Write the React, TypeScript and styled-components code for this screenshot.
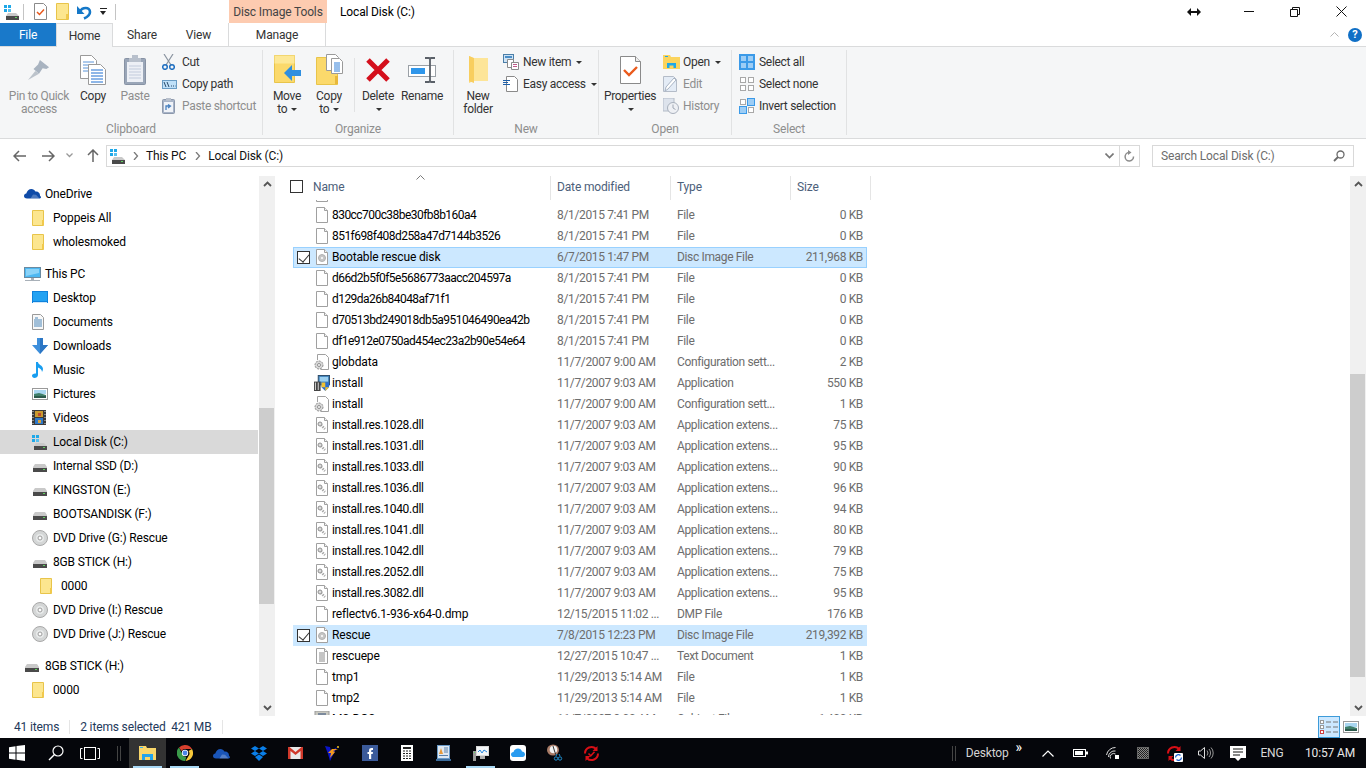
import React, { FC, ReactNode } from 'react'
import styled, { createGlobalStyle } from 'styled-components'

const GlobalStyle = createGlobalStyle`
  html, body {
    margin: 0;
    padding: 0;
    background: #fff;
    overflow: hidden;
  }
  body {
    font-family: Roboto, 'Noto Sans', sans-serif;
    font-size: 12px;
    letter-spacing: -0.15px;
    color: #000;
  }
  * { box-sizing: border-box; }
  svg { display: block; flex: none; }
`

/* ---------- small icons ---------- */

const DriveIcon: FC = () => (
  <svg width="16" height="16" viewBox="0 0 16 16">
    <rect x="0" y="1" width="3" height="3" fill="#1fa8e8" />
    <rect x="4" y="1" width="3" height="3" fill="#1fa8e8" />
    <rect x="0" y="5" width="3" height="3" fill="#1fa8e8" />
    <rect x="4" y="5" width="3" height="3" fill="#55c0ef" />
    <path d="M4 9h8l3 3v1H2v-1z" fill="#c9c9c9" />
    <rect x="2" y="12" width="13" height="4" fill="#4a4a4a" />
    <rect x="11" y="13" width="2" height="1" fill="#5fd35f" />
  </svg>
)

const PlainDriveIcon: FC = () => (
  <svg width="16" height="16" viewBox="0 0 16 16">
    <path d="M3 6h10l2 3v1H1V9z" fill="#c9c9c9" />
    <rect x="1" y="10" width="14" height="4" fill="#4a4a4a" />
    <rect x="11" y="11" width="2" height="1" fill="#5fd35f" />
  </svg>
)

const DvdIcon: FC = () => (
  <svg width="16" height="16" viewBox="0 0 16 16">
    <circle cx="8" cy="8" r="7.5" fill="#d4d6d6" stroke="#a8a8a8" />
    <circle cx="8" cy="8" r="4" fill="#e8eaea" />
    <circle cx="8" cy="8" r="2" fill="#fff" stroke="#9c9c9c" />
  </svg>
)

const NavFolderIcon: FC = () => (
  <svg width="13" height="16" viewBox="0 0 13 16">
    <path d="M.5.500h11v15H.500z" fill="#fce68f" stroke="#e8c44a" />
    <rect x="10" y="10" width="2" height="5" fill="#f1c94c" />
  </svg>
)

const OneDriveIcon: FC<{ color?: string }> = ({ color = '#0f4ba8' }) => (
  <svg width="17" height="11" viewBox="0 0 17 11">
    <path d="M3 10.500C1 10.500 0 9.200 0 8c0-1.400 1-2.300 2.300-2.400C3 3 5 1 7.400 1c1.800 0 3.300 1 4 2.500 2.700-.5 4.600 1.500 4.600 3.700v.5c.7.400 1 1 1 1.600 0 .7-.5 1.200-1.200 1.200z" fill={color} />
    <path d="M6.500 10.500 9 6.500l3 .3 3.500 3.700z" fill="#fff" opacity=".25" />
  </svg>
)

const MonitorIcon: FC = () => (
  <svg width="17" height="16" viewBox="0 0 17 16">
    <rect x=".5" y="1.500" width="16" height="10" fill="#4db8f2" stroke="#6a8aa0" />
    <path d="M2 3h13v4L2 10z" fill="#8bd3f8" />
    <rect x="7" y="12" width="3" height="2" fill="#a8b0b8" />
    <rect x="1" y="14" width="15" height="1" fill="#a8b0b8" />
  </svg>
)

const DesktopIcon: FC = () => (
  <svg width="16" height="13" viewBox="0 0 16 13">
    <rect width="16" height="12" fill="#0f82dc" />
    <rect x="1" y="1" width="14" height="9" fill="#23a2f2" />
    <rect x="1" y="11" width="14" height="1" fill="#cfe8fa" />
  </svg>
)

const DocumentsIcon: FC = () => (
  <svg width="12" height="16" viewBox="0 0 12 16">
    <path d="M.5.500h8l3 3v12H.500z" fill="#f8f8f8" stroke="#9a9a9a" />
    <path d="M3 4h3M2 6h8M2 8h8M2 10h8M2 12h8" stroke="#4a86b8" />
  </svg>
)

const DownloadsIcon: FC = () => (
  <svg width="16" height="16" viewBox="0 0 16 16">
    <path d="M5 0h6v7h5l-8 9-8-9h5z" fill="#3d8fdc" />
    <path d="M8 0h3v7h5l-8 9z" fill="#2c76c4" />
  </svg>
)

const MusicIcon: FC = () => (
  <svg width="12" height="16" viewBox="0 0 12 16">
    <path d="M4 0h2c0 3 5 3 5 7 0 1-.4 2-1 3 0-2-2-4-4-4.500V13c0 2-2 3-3.500 3S0 15 0 13.600 2 11 4 11.500z" fill="#199ef0" />
  </svg>
)

const PicturesIcon: FC = () => (
  <svg width="16" height="12" viewBox="0 0 16 12">
    <rect x=".5" y=".5" width="15" height="11" fill="#fff" stroke="#9a9a9a" />
    <rect x="2" y="2" width="12" height="4" fill="#a9d6f0" />
    <path d="M2 6l5-1 7 2v3H2z" fill="#3f7f6a" />
    <rect x="2" y="8" width="12" height="2" fill="#2c5a4c" />
  </svg>
)

const VideosIcon: FC = () => (
  <svg width="14" height="15" viewBox="0 0 14 15">
    <rect width="14" height="15" fill="#3a3a3a" />
    <path d="M1 1v1M1 4v1M1 7v1M1 10v1M1 13v1M13 1v1M13 4v1M13 7v1M13 10v1M13 13v1" stroke="#ddd" />
    <rect x="3" y="1" width="8" height="6" fill="#c99a2e" />
    <rect x="3" y="8" width="8" height="6" fill="#2e78c9" />
    <rect x="6" y="3" width="3" height="3" fill="#c04a2e" />
    <rect x="6" y="10" width="3" height="3" fill="#d8a23a" />
  </svg>
)

const DocShape: FC<{ children?: ReactNode }> = ({ children }) => (
  <svg width="16" height="16" viewBox="0 0 16 16">
    <path d="M2.500.500h8l3 3v12h-11z" fill="#fff" stroke="#a0a0a0" />
    <path d="M10.500.500v3h3" fill="#f4f4f4" stroke="#a0a0a0" />
    {children}
  </svg>
)

const FileIcon: FC = () => <DocShape />

const DiscFileIcon: FC = () => (
  <DocShape>
    <circle cx="8" cy="9" r="3.500" fill="#c6c6c6" stroke="#b0b0b0" />
    <circle cx="8" cy="9" r="1" fill="#fff" />
  </DocShape>
)

const ConfigFileIcon: FC = () => (
  <svg width="16" height="16" viewBox="0 0 16 16">
    <path d="M3.500 6V.500h8l3 3v12h-8" fill="#fff" stroke="#a0a0a0" />
    <circle cx="5" cy="11" r="4" fill="#d8d8d8" stroke="#8f8f8f" strokeDasharray="2 1" />
    <circle cx="5" cy="11" r="1.500" fill="#fff" stroke="#8f8f8f" />
  </svg>
)

const DllFileIcon: FC = () => (
  <DocShape>
    <path d="M5 6l6 6" stroke="#a8a8a8" strokeWidth="2.500" strokeDasharray="1.500 1" />
    <circle cx="6" cy="7" r="2" fill="#dcdcdc" stroke="#909090" />
  </DocShape>
)

const InstallIcon: FC = () => (
  <svg width="16" height="16" viewBox="0 0 17 17">
    <rect x="4.500" y=".5" width="12" height="10" fill="#3e7fb8" stroke="#2b4a66" />
    <rect x="6" y="2" width="9" height="5" fill="#9cd0f0" />
    <rect x="0" y="7" width="7" height="10" fill="#444" />
    <path d="M1 8h1v8H1zM4 8h1v8H4z" fill="#ddd" />
    <path d="M8 8h8v5l-4 4-4-4z" fill="#2a6fd0" />
    <path d="M8 8h4v5H8zM12 13h4l-4 4z" fill="#f2c230" />
  </svg>
)

const TextFileIcon: FC = () => (
  <DocShape>
    <path d="M5 5h6M5 7h6M5 9h6M5 11h6M5 13h6" stroke="#8a8a8a" />
  </DocShape>
)

const MsDosIcon: FC = () => (
  <svg width="16" height="16" viewBox="0 0 16 16">
    <rect x="1" y="0" width="14" height="16" fill="#c8c8c0" stroke="#999" />
    <rect x="4" y="2" width="8" height="4" fill="#7c8a9c" />
  </svg>
)

/* ---------- ribbon icons ---------- */

const QuickPropsIcon: FC = () => (
  <svg width="13" height="17" viewBox="0 0 13 17">
    <path d="M.5.500h9l3 3v13H.500z" fill="#fff" stroke="#8a8a8a" />
    <path d="M3 9l2.500 2.500L10 6.500" fill="none" stroke="#e8581c" strokeWidth="1.500" />
  </svg>
)

const QuickFolderIcon: FC = () => (
  <svg width="14" height="17" viewBox="0 0 14 17">
    <path d="M.5.500h12v16H.500z" fill="#fce68f" stroke="#e8c44a" />
    <rect x="10" y="11" width="2" height="5" fill="#f1c94c" />
  </svg>
)

const UndoIcon: FC = () => (
  <svg width="15" height="16" viewBox="0 0 15 16">
    <path d="M3 7.500C5 3 13 2.500 13 8c0 3-2.500 5-6 6.500" fill="none" stroke="#1578c8" strokeWidth="2.600" />
    <path d="M0 2v8h7.500z" fill="#1578c8" />
  </svg>
)

const PinIcon: FC = () => (
  <svg width="22" height="22" viewBox="0 0 24 24">
    <path d="M0 23l8-10 4 3z" fill="#bcc3cb" />
    <path d="M13 1l10 8-3 2-4-1-4 6-6-5 5-5z" fill="#a8b3c0" />
  </svg>
)

const CopyLargeIcon: FC = () => (
  <svg width="26" height="30" viewBox="0 0 26 30">
    <path d="M.5.500h11l5 5v18H.500z" fill="#fff" stroke="#9a9a9a" />
    <path d="M3 7h11M3 10h11M3 13h11M3 16h11" stroke="#5a94d8" />
    <path d="M8.500 9.500h12l5 5v15h-17z" fill="#fff" stroke="#9a9a9a" />
    <path d="M11 15h12M11 18h12M11 21h12M11 24h12M11 27h12" stroke="#1f6fd0" />
  </svg>
)

const PasteLargeIcon: FC = () => (
  <svg width="22" height="30" viewBox="0 0 22 30">
    <rect x=".5" y="3.500" width="21" height="26" rx="1" fill="#9aa6b8" stroke="#8792a4" />
    <rect x="3" y="7" width="16" height="20" fill="#edf0f6" />
    <path d="M5 11h12M5 14h12M5 17h12M5 20h12M5 23h12" stroke="#c2cbdc" />
    <path d="M8 0h6v3h3v4H5V3h3z" fill="#b8c0cc" />
  </svg>
)

const CutIcon: FC = () => (
  <svg width="13" height="16" viewBox="0 0 13 16">
    <path d="M2 0l7 11M11 0L4 11" stroke="#8a94a0" strokeWidth="1.200" />
    <circle cx="3" cy="13" r="2.300" fill="none" stroke="#1f6fc0" strokeWidth="1.500" />
    <circle cx="10" cy="13" r="2.300" fill="none" stroke="#1f6fc0" strokeWidth="1.500" />
  </svg>
)

const CopyPathIcon: FC = () => (
  <svg width="15" height="9" viewBox="0 0 15 9">
    <rect x=".5" y=".5" width="14" height="8" fill="#bfe0f8" stroke="#6a9cc4" />
    <path d="M2 2l2 5M5 2l2 5" stroke="#2a4a6a" />
    <path d="M9 6h1M11 6h1M13 6h.5" stroke="#2a4a6a" />
  </svg>
)

const PasteShortcutIcon: FC = () => (
  <svg width="13" height="16" viewBox="0 0 13 16">
    <rect x=".5" y="1.500" width="12" height="14" rx="1" fill="#a8b4c8" stroke="#8c98ac" />
    <rect x="2" y="4" width="9" height="10" fill="#f0f3f8" />
    <path d="M4 12V8h4M6 6.500L8.500 8 6 10" fill="none" stroke="#4a82c0" strokeWidth="1.300" />
    <rect x="4" y="0" width="5" height="3" fill="#b8c0cc" />
  </svg>
)

const MoveToIcon: FC = () => (
  <svg width="27" height="29" viewBox="0 0 27 29">
    <path d="M.5.500h20v27H.500z" fill="#fbd96b" stroke="#e8c44a" />
    <path d="M.5.500h20v8H.500z" fill="#fde896" />
    <path d="M10 18l8-8v5h9v6h-9v5z" fill="#2f8fe0" />
  </svg>
)

const CopyToIcon: FC = () => (
  <svg width="27" height="31" viewBox="0 0 27 31">
    <path d="M.5 3.500h21v27H.500z" fill="#fbd96b" stroke="#e8c44a" />
    <rect x="19" y="22" width="3" height="8" fill="#e8b83a" />
    <path d="M10.500.500h9l3 3v13h-12z" fill="#fff" stroke="#9a9a9a" />
    <path d="M15.500 4.500h8l3 3v12h-11z" fill="#fff" stroke="#9a9a9a" />
    <path d="M18 9h6M18 11h6M18 13h6M18 15h6M18 17h6" stroke="#2f7fd8" />
  </svg>
)

const DeleteIcon: FC = () => (
  <svg width="26" height="26" viewBox="0 0 26 26">
    <path d="M3 3l20 20M23 3L3 23" stroke="#d40f1c" strokeWidth="5" />
  </svg>
)

const RenameIcon: FC = () => (
  <svg width="29" height="26" viewBox="0 0 29 26">
    <rect x=".5" y="8.500" width="27" height="11" fill="#fff" stroke="#9aa0a6" />
    <rect x="3" y="11" width="14" height="6" fill="#2f96ea" />
    <path d="M17 1h4l1 1 1-1h4M22 2v22M17 25h4l1-1 1 1h4" fill="none" stroke="#5a6068" strokeWidth="1.800" />
  </svg>
)

const NewFolderIcon: FC = () => (
  <svg width="19" height="27" viewBox="0 0 19 27">
    <path d="M0 0l4 2h15v23H4l-4 2z" fill="#fcd877" />
    <path d="M0 0l5 2v25l-5-2z" fill="#f8ce5f" />
    <path d="M5 2h14v23H5z" fill="#fde598" />
  </svg>
)

const NewItemIcon: FC = () => (
  <svg width="16" height="16" viewBox="0 0 16 16">
    <rect x=".5" y=".5" width="10" height="8" fill="#cfe3f4" stroke="#4a7ea8" />
    <rect x="2" y="2" width="7" height="2" fill="#4a8ec8" />
    <path d="M4.500 5.500h6v8h-6z" fill="#fff" stroke="#8a8a8a" />
    <path d="M8.500 8.500h7v7h-7z" fill="#fff" stroke="#8a8a8a" />
    <path d="M10 10.500h4M10 12.500h4" stroke="#c05a8a" />
  </svg>
)

const EasyAccessIcon: FC = () => (
  <svg width="15" height="16" viewBox="0 0 15 16">
    <path d="M3.500.500h8l3 3v12h-11z" fill="#fff" stroke="#8a8a8a" />
    <path d="M0 4.500h7M0 6.500h5M0 8.500h7" stroke="#1f5fa8" />
  </svg>
)

const PropertiesIcon: FC = () => (
  <svg width="21" height="28" viewBox="0 0 21 28">
    <path d="M.5.500h15l5 5v22H.500z" fill="#fff" stroke="#8a8a8a" />
    <path d="M15.500.500v5h5" fill="#eee" stroke="#8a8a8a" />
    <path d="M4 14l5 5 8-8" fill="none" stroke="#ea5a1c" strokeWidth="2.400" />
  </svg>
)

const OpenIcon: FC = () => (
  <svg width="17" height="14" viewBox="0 0 17 14">
    <path d="M0 0h7l1 2h9v12H0z" fill="#fbd45e" />
    <rect x="2" y="1" width="3" height="1" fill="#1fa8e8" />
    <path d="M4 13V8h9v5h-2.500v-2.500h-4V13z" fill="#1fa8e8" />
  </svg>
)

const EditIcon: FC = () => (
  <svg width="15" height="16" viewBox="0 0 15 16">
    <path d="M.5.500h10l3 3v12H.500z" fill="#e4ecf6" stroke="#b4bcc8" />
    <path d="M2 15l1-4 8-9 2 2-8 9z" fill="#fff" stroke="#a8b4c4" />
  </svg>
)

const HistoryIcon: FC = () => (
  <svg width="16" height="16" viewBox="0 0 16 16">
    <rect x="0" y="0" width="11" height="13" fill="#dde3ec" stroke="#b4bcc8" />
    <circle cx="10" cy="10" r="5.500" fill="#eef0f4" stroke="#a8b0bc" />
    <path d="M10 6.500V10l2.500 1.500" fill="none" stroke="#a0a8b4" />
  </svg>
)

const SelectAllIcon: FC = () => (
  <svg width="16" height="16" viewBox="0 0 16 16">
    <rect x=".5" y=".5" width="15" height="15" fill="#3b9ae8" stroke="#3b9ae8" />
    <rect x="2" y="2" width="5" height="5" fill="#9dcdf5" />
    <rect x="9" y="2" width="5" height="5" fill="#9dcdf5" />
    <rect x="2" y="9" width="5" height="5" fill="#9dcdf5" />
    <rect x="9" y="9" width="5" height="5" fill="#9dcdf5" />
  </svg>
)

const SelectNoneIcon: FC = () => (
  <svg width="16" height="16" viewBox="0 0 16 16">
    <g fill="#fff" stroke="#a8a8a8">
      <rect x="1.500" y="1.500" width="5" height="5" />
      <rect x="9.500" y="1.500" width="5" height="5" />
      <rect x="1.500" y="9.500" width="5" height="5" />
      <rect x="9.500" y="9.500" width="5" height="5" />
    </g>
  </svg>
)

const InvertIcon: FC = () => (
  <svg width="16" height="16" viewBox="0 0 16 16">
    <rect x="1.500" y="1.500" width="5" height="5" fill="#fff" stroke="#a8a8a8" />
    <rect x="8.500" y=".5" width="7" height="7" fill="#9dcdf5" stroke="#3b9ae8" />
    <rect x=".5" y="8.500" width="7" height="7" fill="#9dcdf5" stroke="#3b9ae8" />
    <rect x="9.500" y="9.500" width="5" height="5" fill="#fff" stroke="#a8a8a8" />
  </svg>
)

const ChevronRight: FC = () => (
  <svg width="6" height="8" viewBox="0 0 6 8">
    <path d="M1 0l3.500 4L1 8" fill="none" stroke="#7a7a7a" strokeWidth="1.300" />
  </svg>
)

const ScrollArrow: FC<{ up?: boolean }> = ({ up }) => (
  <svg width="9" height="6" viewBox="0 0 9 6">
    <path d={up ? 'M1 5l3.500-3.500L8 5' : 'M1 1l3.500 3.500L8 1'} fill="none" stroke="#555" strokeWidth="1.800" />
  </svg>
)

/* ---------- taskbar icons ---------- */

const TaskExplorerIcon: FC = () => (
  <svg width="17" height="14" viewBox="0 0 17 14">
    <path d="M0 0h7l1 2h9v12H0z" fill="#f8d66a" />
    <rect x="1" y="1" width="3" height="1" fill="#38b0f0" />
    <path d="M3 14V8h11v6h-3v-3H6v3z" fill="#22a4ec" />
  </svg>
)

const ChromeIcon: FC = () => (
  <svg width="16" height="16" viewBox="0 0 16 16">
    <path d="M8 0a8 8 0 0 1 7 4H8a4 4 0 0 0-3.500 2L2 2.500A8 8 0 0 1 8 0" fill="#d8402e" />
    <path d="M15 4a8 8 0 0 1-6.500 12l3-5A4 4 0 0 0 11.500 6z" fill="#f8c83a" />
    <path d="M2 2.500 5.200 9a4 4 0 0 0 4 3l-1 4A8 8 0 0 1 2 2.500" fill="#3a9a4a" />
    <circle cx="8" cy="8" r="3.200" fill="#fff" />
    <circle cx="8" cy="8" r="2.400" fill="#4a84e8" />
  </svg>
)

const DropboxIcon: FC = () => (
  <svg width="16" height="15" viewBox="0 0 16 15">
    <path d="M4 0l4 2.500L4 5 0 2.500zM12 0l4 2.500L12 5 8 2.500zM4 5l4 2.500L4 10 0 7.500zM12 5l4 2.500-4 2.500-4-2.500zM4 11l4-2.500 4 2.500-4 4z" fill="#0a7ee8" />
  </svg>
)

const GmailIcon: FC = () => (
  <svg width="15" height="12" viewBox="0 0 15 12">
    <rect width="15" height="12" fill="#e8e8e8" />
    <path d="M0 0v12h2.500V4L7.500 8l5-4v8H15V0h-1.500L7.500 5 1.500 0z" fill="#d0382a" />
  </svg>
)

const FlashIcon: FC = () => (
  <svg width="15" height="16" viewBox="0 0 15 16">
    <path d="M0 1l5 1 1 4 6-4-4 8-3 6-2-7z" fill="#0a14c8" />
    <path d="M3 8l4-4h6l-5 2 2 1-5 6 1-5z" fill="#f49a1c" />
    <circle cx="13" cy="2" r="1" fill="#f4c21c" />
  </svg>
)

const FacebookIcon: FC = () => (
  <svg width="16" height="16" viewBox="0 0 16 16">
    <rect width="16" height="16" fill="#3b5a9a" />
    <path d="M7 14V9H5.500V7H7V5.500C7 3.800 8 3 9.500 3H11v2H10c-.6 0-.8.300-.8.800V7H11l-.3 2H9.200v5z" fill="#fff" />
  </svg>
)

const CalculatorIcon: FC = () => (
  <svg width="12" height="16" viewBox="0 0 12 16">
    <rect width="12" height="16" fill="#fff" />
    <rect x="2" y="2" width="8" height="2" fill="#222" />
    <path d="M2 6h2M5 6h2M8 6h2M2 8.500h2M5 8.500h2M8 8.500h2M2 11h2M5 11h2M8 11h2M2 13.500h2M5 13.500h2M8 13.500h2" stroke="#222" />
  </svg>
)

const ContactIcon: FC = () => (
  <svg width="15" height="16" viewBox="0 0 15 16">
    <rect x="1" y="0" width="13" height="14" fill="#6a9ac8" />
    <rect x="2" y="1" width="11" height="12" fill="#dfe8f2" />
    <path d="M3 9l2-6 2 6z" fill="#e89a3a" />
    <path d="M8 3h4M8 5h4M8 7h4M3 10.500h9" stroke="#5a80a8" />
    <rect x="0" y="14" width="15" height="2" fill="#3a6a9a" />
  </svg>
)

const PerfMonIcon: FC = () => (
  <svg width="16" height="16" viewBox="0 0 16 16">
    <rect x="3" y="1" width="13" height="10" fill="#d8d8d8" />
    <rect x="4" y="2" width="11" height="8" fill="#f4f6f8" />
    <path d="M5 7l2-2 2 3 2-3 3 2" fill="none" stroke="#2a8ae0" />
    <rect x="0" y="6" width="3" height="10" fill="#9a9a9a" />
    <rect x="1" y="7" width="1" height="1" fill="#5fd35f" />
    <rect x="7" y="11" width="5" height="3" fill="#b0b0b0" />
  </svg>
)

const ICloudIcon: FC = () => (
  <svg width="16" height="16" viewBox="0 0 16 16">
    <rect width="16" height="16" rx="3" fill="#fff" />
    <path d="M4 12c-2 0-3-1.300-3-2.600S2 7 3.500 7C4 5 6 3.500 8 3.500c2 0 3.500 1.200 4 3 1.500 0 3 1.200 3 2.800S14 12 12.500 12z" fill="#2a9cf0" />
  </svg>
)

const ClockToolIcon: FC = () => (
  <svg width="16" height="18" viewBox="0 0 16 18">
    <ellipse cx="6" cy="6" rx="6" ry="5.500" fill="#a87a66" />
    <circle cx="6.500" cy="5.500" r="3.800" fill="#f2f2f2" />
    <path d="M6 2l1.500 5L9 11" stroke="#333" fill="none" />
    <circle cx="9" cy="14.500" r="1.700" fill="none" stroke="#1f8fd0" />
    <circle cx="13" cy="14.500" r="1.700" fill="none" stroke="#1f8fd0" />
    <path d="M9 12l1-2M13 12l-1-2" stroke="#1f8fd0" />
  </svg>
)

const RedSyncIcon: FC<{ badge?: boolean }> = ({ badge }) => (
  <svg width="17" height="17" viewBox="0 0 17 17">
    <path d="M2 8.500a6.500 6.500 0 0 1 11-4.700M15 8.500a6.500 6.500 0 0 1-11 4.700" fill="none" stroke="#d80f16" strokeWidth="2" />
    <path d="M14.500 1v5h-5zM2.500 16v-5h5z" fill="#d80f16" />
    {badge ? (
      <g>
        <rect x="8" y="8" width="9" height="9" rx="1" fill="#fff" />
        <path d="M9.500 12.500a3 3 0 0 1 5-2M15.500 12.500a3 3 0 0 1-5 2" fill="none" stroke="#1a5fd0" strokeWidth="1.300" />
      </g>
    ) : (
      <path d="M5.500 8.500l2.300 2.300 3.700-4" fill="none" stroke="#d80f16" strokeWidth="1.600" />
    )}
  </svg>
)

/* ---------- data ---------- */

type FileKind = 'file' | 'disc' | 'config' | 'install' | 'dll' | 'text' | 'msdos'

interface FileRowData {
  name: string
  date: string
  type: string
  size: string
  kind: FileKind
  tracking?: number
  selected?: boolean
  focused?: boolean
}

const hashFile = (name: string): FileRowData => ({ name, date: '8/1/2015 7:41 PM', type: 'File', size: '0 KB', kind: 'file', tracking: -0.55 })
const dllFile = (name: string, size: string): FileRowData => ({
  name: `install.res.${name}.dll`,
  date: '11/7/2007 9:03 AM',
  type: 'Application extens...',
  size,
  kind: 'dll',
  tracking: -0.3,
})

const files: FileRowData[] = [
  { name: '', date: '', type: '', size: '', kind: 'file' },
  hashFile('830cc700c38be30fb8b160a4'),
  hashFile('851f698f408d258a47d7144b3526'),
  { name: 'Bootable rescue disk', date: '6/7/2015 1:47 PM', type: 'Disc Image File', size: '211,968 KB', kind: 'disc', selected: true, focused: true },
  hashFile('d66d2b5f0f5e5686773aacc204597a'),
  hashFile('d129da26b84048af71f1'),
  hashFile('d70513bd249018db5a951046490ea42b'),
  hashFile('df1e912e0750ad454ec23a2b90e54e64'),
  { name: 'globdata', date: '11/7/2007 9:00 AM', type: 'Configuration sett...', size: '2 KB', kind: 'config' },
  { name: 'install', date: '11/7/2007 9:03 AM', type: 'Application', size: '550 KB', kind: 'install' },
  { name: 'install', date: '11/7/2007 9:00 AM', type: 'Configuration sett...', size: '1 KB', kind: 'config' },
  dllFile('1028', '75 KB'),
  dllFile('1031', '95 KB'),
  dllFile('1033', '90 KB'),
  dllFile('1036', '96 KB'),
  dllFile('1040', '94 KB'),
  dllFile('1041', '80 KB'),
  dllFile('1042', '79 KB'),
  dllFile('2052', '75 KB'),
  dllFile('3082', '95 KB'),
  { name: 'reflectv6.1-936-x64-0.dmp', date: '12/15/2015 11:02 ...', type: 'DMP File', size: '176 KB', kind: 'file' },
  { name: 'Rescue', date: '7/8/2015 12:23 PM', type: 'Disc Image File', size: '219,392 KB', kind: 'disc', selected: true },
  { name: 'rescuepe', date: '12/27/2015 10:47 ...', type: 'Text Document', size: '1 KB', kind: 'text' },
  { name: 'tmp1', date: '11/29/2013 5:14 AM', type: 'File', size: '1 KB', kind: 'file' },
  { name: 'tmp2', date: '11/29/2013 5:14 AM', type: 'File', size: '1 KB', kind: 'file' },
  { name: 'MS-DOS', date: '11/7/2007 9:00 AM', type: 'Cabinet File', size: '1,400 KB', kind: 'msdos' },
]

const fileIcons: Record<FileKind, ReactNode> = {
  file: <FileIcon />,
  disc: <DiscFileIcon />,
  config: <ConfigFileIcon />,
  install: <InstallIcon />,
  dll: <DllFileIcon />,
  text: <TextFileIcon />,
  msdos: <MsDosIcon />,
}

interface NavItem {
  label: string
  icon: ReactNode
  level: number
  active?: boolean
  gap?: boolean
}

const navItems: NavItem[] = [
  { label: 'OneDrive', icon: <OneDriveIcon />, level: 0 },
  { label: 'Poppeis All', icon: <NavFolderIcon />, level: 1 },
  { label: 'wholesmoked', icon: <NavFolderIcon />, level: 1 },
  { label: 'This PC', icon: <MonitorIcon />, level: 0, gap: true },
  { label: 'Desktop', icon: <DesktopIcon />, level: 1 },
  { label: 'Documents', icon: <DocumentsIcon />, level: 1 },
  { label: 'Downloads', icon: <DownloadsIcon />, level: 1 },
  { label: 'Music', icon: <MusicIcon />, level: 1 },
  { label: 'Pictures', icon: <PicturesIcon />, level: 1 },
  { label: 'Videos', icon: <VideosIcon />, level: 1 },
  { label: 'Local Disk (C:)', icon: <DriveIcon />, level: 1, active: true },
  { label: 'Internal SSD (D:)', icon: <PlainDriveIcon />, level: 1 },
  { label: 'KINGSTON (E:)', icon: <PlainDriveIcon />, level: 1 },
  { label: 'BOOTSANDISK (F:)', icon: <PlainDriveIcon />, level: 1 },
  { label: 'DVD Drive (G:) Rescue', icon: <DvdIcon />, level: 1 },
  { label: '8GB STICK (H:)', icon: <PlainDriveIcon />, level: 1 },
  { label: '0000', icon: <NavFolderIcon />, level: 2 },
  { label: 'DVD Drive (I:) Rescue', icon: <DvdIcon />, level: 1 },
  { label: 'DVD Drive (J:) Rescue', icon: <DvdIcon />, level: 1 },
  { label: '8GB STICK (H:)', icon: <PlainDriveIcon />, level: 0, gap: true },
  { label: '0000', icon: <NavFolderIcon />, level: 1 },
]

/* ---------- app ---------- */

const App: FC = () => {
  return (
    <Window>
      <GlobalStyle />
      <TitleBar>
        <QuickIcon $w={23}><DriveIcon /></QuickIcon>
        <QuickSep />
        <QuickIcon $w={33}><QuickPropsIcon /></QuickIcon>
        <QuickIcon $w={12}><QuickFolderIcon /></QuickIcon>
        <QuickIcon $w={30}><UndoIcon /></QuickIcon>
        <QuickIcon $w={16}><QatDrop /></QuickIcon>
        <QuickSep />
        <ContextTab>Disc Image Tools</ContextTab>
        <TitleText>Local Disk (C:)</TitleText>
        <WindowButtons>
          <WinButton $w={64}>
            <svg width="14" height="8" viewBox="0 0 14 8"><path d="M0 4l4-4v8zM14 4l-4-4v8z" fill="#111" /><rect x="3" y="3" width="8" height="2" fill="#111" /></svg>
          </WinButton>
          <WinButton $w={46}>
            <svg width="10" height="1" viewBox="0 0 10 1"><rect width="10" height="1" fill="#111" /></svg>
          </WinButton>
          <WinButton $w={46}>
            <svg width="10" height="10" viewBox="0 0 10 10"><path d="M.5 2.500h7v7h-7zM2.500 2.500v-2h7v7h-2" fill="none" stroke="#111" /></svg>
          </WinButton>
          <WinButton $w={46}>
            <svg width="11" height="11" viewBox="0 0 11 11"><path d="M.5.500l10 10M10.500.500l-10 10" stroke="#111" /></svg>
          </WinButton>
        </WindowButtons>
      </TitleBar>

      <TabRow>
        <FileTab>File</FileTab>
        <Tab $w={57} $active>Home</Tab>
        <Tab $w={58}>Share</Tab>
        <Tab $w={55}>View</Tab>
        <ManageTab>Manage</ManageTab>
        <TabTools>
          <svg width="9" height="5" viewBox="0 0 9 5"><path d="M.5 4.500l4-4 4 4" fill="none" stroke="#b4b4b4" /></svg>
          <HelpBadge>?</HelpBadge>
        </TabTools>
      </TabRow>

      <Ribbon>
        <Group $w={263}>
          <GroupBody $pad={4}>
            <LargeButton $w={70} $disabled>
              <IconSlot><PinIcon /></IconSlot>
              Pin to Quick<br />access
            </LargeButton>
            <LargeButton $w={38}>
              <IconSlot><CopyLargeIcon /></IconSlot>
              Copy
            </LargeButton>
            <LargeButton $w={46} $disabled>
              <IconSlot><PasteLargeIcon /></IconSlot>
              Paste
            </LargeButton>
            <SmallColumn $left={4}>
              <SmallButton><SmallIcon><CutIcon /></SmallIcon>Cut</SmallButton>
              <SmallButton><SmallIcon><CopyPathIcon /></SmallIcon>Copy path</SmallButton>
              <SmallButton $disabled><SmallIcon><PasteShortcutIcon /></SmallIcon>Paste shortcut</SmallButton>
            </SmallColumn>
          </GroupBody>
          <GroupLabel>Clipboard</GroupLabel>
        </Group>

        <Group $w={191}>
          <GroupBody $pad={4}>
            <LargeButton $w={40}>
              <IconSlot><MoveToIcon /></IconSlot>
              Move<br />to <Caret />
            </LargeButton>
            <LargeButton $w={44}>
              <IconSlot><CopyToIcon /></IconSlot>
              Copy<br />to <Caret />
            </LargeButton>
            <RibbonSep />
            <LargeButton $w={44}>
              <IconSlot><DeleteIcon /></IconSlot>
              Delete<br /><Caret />
            </LargeButton>
            <LargeButton $w={44}>
              <IconSlot><RenameIcon /></IconSlot>
              Rename
            </LargeButton>
          </GroupBody>
          <GroupLabel>Organize</GroupLabel>
        </Group>

        <Group $w={145}>
          <GroupBody $pad={2}>
            <LargeButton $w={44}>
              <IconSlot><NewFolderIcon /></IconSlot>
              New<br />folder
            </LargeButton>
            <SmallColumn $left={3}>
              <SmallButton><SmallIcon><NewItemIcon /></SmallIcon>New item <Caret /></SmallButton>
              <SmallButton><SmallIcon><EasyAccessIcon /></SmallIcon>Easy access <Caret /></SmallButton>
            </SmallColumn>
          </GroupBody>
          <GroupLabel>New</GroupLabel>
        </Group>

        <Group $w={133}>
          <GroupBody $pad={2}>
            <LargeButton $w={58}>
              <IconSlot><PropertiesIcon /></IconSlot>
              Properties<br /><Caret />
            </LargeButton>
            <SmallColumn $left={4}>
              <SmallButton><SmallIcon><OpenIcon /></SmallIcon>Open <Caret /></SmallButton>
              <SmallButton $disabled><SmallIcon><EditIcon /></SmallIcon>Edit</SmallButton>
              <SmallButton $disabled><SmallIcon><HistoryIcon /></SmallIcon>History</SmallButton>
            </SmallColumn>
          </GroupBody>
          <GroupLabel>Open</GroupLabel>
        </Group>

        <Group $w={115}>
          <GroupBody $pad={7}>
            <SmallColumn $left={0}>
              <SmallButton><SmallIcon><SelectAllIcon /></SmallIcon>Select all</SmallButton>
              <SmallButton><SmallIcon><SelectNoneIcon /></SmallIcon>Select none</SmallButton>
              <SmallButton><SmallIcon><InvertIcon /></SmallIcon>Invert selection</SmallButton>
            </SmallColumn>
          </GroupBody>
          <GroupLabel>Select</GroupLabel>
        </Group>
      </Ribbon>

      <AddressRow>
        <NavArrows>
          <svg width="13" height="12" viewBox="0 0 13 12"><path d="M6 1L1 6l5 5M1 6h12" fill="none" stroke="#666" strokeWidth="1.500" /></svg>
          <svg width="13" height="12" viewBox="0 0 13 12"><path d="M7 1l5 5-5 5M12 6H0" fill="none" stroke="#666" strokeWidth="1.500" /></svg>
          <svg width="7" height="5" viewBox="0 0 7 5"><path d="M.5.500l3 3 3-3" fill="none" stroke="#999" strokeWidth="1.300" /></svg>
          <svg width="12" height="13" viewBox="0 0 12 13"><path d="M1 6l5-5 5 5M6 1v12" fill="none" stroke="#666" strokeWidth="1.500" /></svg>
        </NavArrows>
        <AddressBox>
          <DriveIcon />
          <Crumb $left={7}><ChevronRight /></Crumb>
          <CrumbText>This PC</CrumbText>
          <Crumb $left={9}><ChevronRight /></Crumb>
          <CrumbText>Local Disk (C:)</CrumbText>
          <AddressTools>
            <svg width="9" height="6" viewBox="0 0 9 6"><path d="M.5.500l4 4 4-4" fill="none" stroke="#777" strokeWidth="1.600" /></svg>
            <RefreshSlot>
              <svg width="11" height="12" viewBox="0 0 11 12"><path d="M5 2.500a4.200 4.200 0 1 0 4.500 4" fill="none" stroke="#8c8c8c" strokeWidth="1.500" /><path d="M4 0l3.500 2.500L4 5z" fill="#8c8c8c" /></svg>
            </RefreshSlot>
          </AddressTools>
        </AddressBox>
        <SearchBox>
          Search Local Disk (C:)
          <svg width="12" height="12" viewBox="0 0 12 12"><circle cx="7.500" cy="4.500" r="3.500" fill="none" stroke="#6a6a6a" strokeWidth="1.300" /><path d="M5 7l-4 4" stroke="#6a6a6a" strokeWidth="1.800" /></svg>
        </SearchBox>
      </AddressRow>

      <Main>
        <NavPane>
          <NavList>
            {navItems.map((item, i) => (
              <NavRow key={i} $level={item.level} $active={item.active} $gap={item.gap}>
                <NavIcon>{item.icon}</NavIcon>
                {item.label}
              </NavRow>
            ))}
          </NavList>
          <Scrollbar $w={16}>
            <ScrollButton><ScrollArrow up /></ScrollButton>
            <ScrollTrack>
              <ScrollThumb $top={215} $h={196} />
            </ScrollTrack>
            <ScrollButton><ScrollArrow /></ScrollButton>
          </Scrollbar>
        </NavPane>

        <FilePane>
          <HeaderRow>
            <SortGlyph>
              <svg width="9" height="5" viewBox="0 0 9 5"><path d="M.5 4.500l4-4 4 4" fill="none" stroke="#7a7a7a" /></svg>
            </SortGlyph>
            <NameHeader>
              <HeaderCheck />
              Name
            </NameHeader>
            <HeaderCell $w={120}>Date modified</HeaderCell>
            <HeaderCell $w={120}>Type</HeaderCell>
            <HeaderCell $w={80}>Size</HeaderCell>
          </HeaderRow>
          <FileList>
            {files.map((f, i) => (
              <FileRow key={i} $selected={f.selected} $focused={f.focused}>
                <NameCell $tracking={f.tracking ?? -0.15}>
                  <CheckSlot>{f.selected && <RowCheck />}</CheckSlot>
                  <FileIconSlot>{fileIcons[f.kind]}</FileIconSlot>
                  {f.name}
                </NameCell>
                <MetaCell>{f.date}</MetaCell>
                <MetaCell>{f.type}</MetaCell>
                <SizeCell>{f.size}</SizeCell>
              </FileRow>
            ))}
          </FileList>
        </FilePane>

        <Scrollbar $w={16}>
          <ScrollButton><ScrollArrow up /></ScrollButton>
          <ScrollTrack>
            <ScrollThumb $top={181} $h={303} />
          </ScrollTrack>
          <ScrollButton><ScrollArrow /></ScrollButton>
        </Scrollbar>
      </Main>

      <StatusBar>
        <StatusText>41 items</StatusText>
        <StatusSep />
        <StatusText>2 items selected&nbsp;&nbsp;421 MB</StatusText>
        <StatusSep />
        <ViewButtons>
          <DetailsButton>
            <svg width="18" height="14" viewBox="0 0 18 14">
              <g fill="#fff" stroke="#999"><rect x=".5" y=".5" width="3" height="3" /><rect x=".5" y="5.500" width="3" height="3" /></g>
              <rect x=".5" y="10.500" width="3" height="3" fill="#fff" stroke="#d04040" />
              <path d="M6 2h5M13 2h5M6 7h5M13 7h5M6 12h5M13 12h5" stroke="#777" />
            </svg>
          </DetailsButton>
          <LargeViewSlot><PicturesIcon /></LargeViewSlot>
        </ViewButtons>
      </StatusBar>

      <Taskbar>
        <TaskStart>
          <svg width="16" height="16" viewBox="0 0 16 16">
            <path d="M0 2.300l6.500-1V7.500H0zM7.500 1.100L16 0v7.500H7.500zM0 8.500h6.500v6.300L0 13.700zM7.500 8.500H16V16l-8.500-1.200z" fill="#fff" />
          </svg>
        </TaskStart>
        <TaskUtility $w={31}>
          <svg width="16" height="16" viewBox="0 0 16 16"><circle cx="10" cy="6" r="5" fill="none" stroke="#fff" strokeWidth="1.200" /><path d="M6.500 9.500L1 15" stroke="#fff" strokeWidth="1.400" /></svg>
        </TaskUtility>
        <TaskUtility $w={38}>
          <svg width="20" height="13" viewBox="0 0 20 13"><rect x="4.500" y=".5" width="11" height="12" fill="none" stroke="#fff" /><path d="M2.500 1.500H.5v10h2M17.500 1.500h2v10h-2" fill="none" stroke="#fff" /></svg>
        </TaskUtility>
        <GripSep />
        <TaskIcon $w={37} $running $active><TaskExplorerIcon /></TaskIcon>
        <TaskIcon $w={37} $running><ChromeIcon /></TaskIcon>
        <TaskIcon $w={37}><OneDriveIcon color="#1a55b8" /></TaskIcon>
        <TaskIcon $w={37}><DropboxIcon /></TaskIcon>
        <TaskIcon $w={37}><GmailIcon /></TaskIcon>
        <TaskIcon $w={37}><FlashIcon /></TaskIcon>
        <TaskIcon $w={37}><FacebookIcon /></TaskIcon>
        <TaskIcon $w={37}><CalculatorIcon /></TaskIcon>
        <TaskIcon $w={37}><ContactIcon /></TaskIcon>
        <TaskIcon $w={37} $running><PerfMonIcon /></TaskIcon>
        <TaskIcon $w={37}><ICloudIcon /></TaskIcon>
        <TaskIcon $w={37}><ClockToolIcon /></TaskIcon>
        <TaskIcon $w={37}><RedSyncIcon /></TaskIcon>

        <Tray>
          <GripSep />
          <DesktopLabel>Desktop</DesktopLabel>
          <Chevrons>»</Chevrons>
          <TrayIcon $w={32}>
            <svg width="12" height="7" viewBox="0 0 12 7"><path d="M.5 6.500L6 1l5.500 5.500" fill="none" stroke="#fff" strokeWidth="1.200" /></svg>
          </TrayIcon>
          <TrayIcon $w={32}>
            <svg width="15" height="8" viewBox="0 0 15 8"><rect x=".5" y=".5" width="12" height="7" fill="none" stroke="#fff" /><rect x="2" y="2" width="8" height="4" fill="#fff" /><rect x="13" y="2.500" width="2" height="3" fill="#fff" /></svg>
          </TrayIcon>
          <TrayIcon $w={32}>
            <svg width="13" height="12" viewBox="0 0 13 12"><path d="M.5 8a9 9 0 0 1 9-7.500M2.500 10a6 6 0 0 1 7-6M4.500 11.500a3.500 3.500 0 0 1 5-4.500" fill="none" stroke="#ddd" /><rect x="9" y="8" width="4" height="4" fill="#fff" /></svg>
          </TrayIcon>
          <TrayIcon $w={30}>
            <GridGlyph />
          </TrayIcon>
          <TrayIcon $w={32}><RedSyncIcon badge /></TrayIcon>
          <TrayIcon $w={32}>
            <svg width="16" height="12" viewBox="0 0 16 12"><path d="M.5 4h2l4-3.500v11L2.500 8h-2z" fill="none" stroke="#ddd" /><path d="M9 3.500a4 4 0 0 1 0 5M11 2a6 6 0 0 1 0 8M13 .5a8 8 0 0 1 0 11" fill="none" stroke="#999" /></svg>
          </TrayIcon>
          <TrayIcon $w={32}>
            <svg width="16" height="15" viewBox="0 0 16 15"><path d="M0 0h16v12h-5l-3 3-3-3H0z" fill="#fff" /><path d="M3 3h10M3 6h10M3 9h7" stroke="#111" /></svg>
          </TrayIcon>
          <TrayText $w={36}>ENG</TrayText>
          <ClockText>10:57 AM</ClockText>
        </Tray>
      </Taskbar>
    </Window>
  )
}

export default App

/* ---------- styles ---------- */

const Window = styled.div`
  width: 1366px;
  height: 768px;
  display: flex;
  flex-direction: column;
  overflow: hidden;
  background: #fff;
`

const TitleBar = styled.div`
  height: 23px;
  display: flex;
  align-items: center;
`

const QuickIcon = styled.div<{ $w: number }>`
  width: ${({ $w }) => $w}px;
  height: 23px;
  display: flex;
  align-items: center;
  justify-content: center;
`

const QuickSep = styled.div`
  width: 1px;
  height: 16px;
  background: #c4c4c4;
`

const QatDrop = styled.span`
  display: block;
  width: 7px;
  height: 7px;
  margin-right: 8px;
  border-top: 1px solid #222;
  position: relative;
  &::after {
    content: '';
    position: absolute;
    left: 0;
    top: 2px;
    border-left: 3.5px solid transparent;
    border-right: 3.5px solid transparent;
    border-top: 4px solid #222;
  }
`

const ContextTab = styled.div`
  margin-left: 113px;
  width: 98px;
  height: 23px;
  background: #fdcbb0;
  color: #444;
  display: flex;
  align-items: center;
  justify-content: center;
`

const TitleText = styled.div`
  margin-left: 13px;
  color: #000;
`

const WindowButtons = styled.div`
  margin-left: auto;
  display: flex;
  padding-right: 2px;
`

const WinButton = styled.div<{ $w: number }>`
  width: ${({ $w }) => $w}px;
  height: 20px;
  display: flex;
  align-items: center;
  justify-content: center;
`

const TabRow = styled.div`
  height: 23px;
  display: flex;
  align-items: stretch;
`

const FileTab = styled.div`
  width: 56px;
  background: #1979ca;
  color: #fff;
  display: flex;
  align-items: center;
  justify-content: center;
`

const Tab = styled.div<{ $w: number; $active?: boolean }>`
  width: ${({ $w }) => $w}px;
  height: ${({ $active }) => ($active ? 24 : 23)}px;
  display: flex;
  align-items: center;
  justify-content: center;
  color: #333;
  background: ${({ $active }) => ($active ? '#f5f6f7' : 'transparent')};
  border: ${({ $active }) => ($active ? '1px solid #dadbdc' : 'none')};
  border-bottom: none;
  position: relative;
  z-index: 1;
`

const ManageTab = styled.div`
  margin-left: 2px;
  width: 98px;
  border-left: 1px solid #dadbdc;
  border-right: 1px solid #dadbdc;
  display: flex;
  align-items: center;
  justify-content: center;
  color: #333;
`

const TabTools = styled.div`
  margin-left: auto;
  display: flex;
  align-items: center;
  gap: 9px;
  padding-right: 4px;
`

const HelpBadge = styled.div`
  width: 14px;
  height: 14px;
  border-radius: 50%;
  background: #0f6fc6;
  color: #fff;
  font-size: 11px;
  font-weight: 700;
  display: flex;
  align-items: center;
  justify-content: center;
`

const Ribbon = styled.div`
  height: 93px;
  display: flex;
  background: #f5f6f7;
  border-top: 1px solid #dadbdc;
  border-bottom: 1px solid #dadbdc;
  padding: 3px 0;
`

const Group = styled.div<{ $w: number }>`
  width: ${({ $w }) => $w}px;
  display: flex;
  flex-direction: column;
  border-right: 1px solid #e1e2e3;
`

const GroupBody = styled.div<{ $pad: number }>`
  flex: 1;
  display: flex;
  padding-left: ${({ $pad }) => $pad}px;
`

const GroupLabel = styled.div`
  text-align: center;
  color: #8e8e8e;
  line-height: 12px;
`

const LargeButton = styled.div<{ $w: number; $disabled?: boolean }>`
  width: ${({ $w }) => $w}px;
  flex: none;
  text-align: center;
  line-height: 13px;
  white-space: nowrap;
  letter-spacing: -0.3px;
  color: ${({ $disabled }) => ($disabled ? '#8e8e8e' : '#333')};
`

const IconSlot = styled.div`
  height: 37px;
  padding-top: 2px;
  margin-bottom: 3px;
  display: flex;
  align-items: center;
  justify-content: center;
`

const Caret = styled.span`
  display: inline-block;
  vertical-align: middle;
  margin-left: 1px;
  border-left: 3px solid transparent;
  border-right: 3px solid transparent;
  border-top: 3px solid #333;
`

const SmallColumn = styled.div<{ $left: number }>`
  margin-left: ${({ $left }) => $left}px;
  display: flex;
  flex-direction: column;
  padding-top: 1px;
`

const SmallButton = styled.div<{ $disabled?: boolean }>`
  height: 22px;
  display: flex;
  align-items: center;
  gap: 3px;
  white-space: nowrap;
  letter-spacing: -0.3px;
  color: ${({ $disabled }) => ($disabled ? '#8e8e8e' : '#333')};
  ${Caret} {
    margin-left: 2px;
  }
`

const SmallIcon = styled.div`
  width: 17px;
  height: 22px;
  display: flex;
  align-items: center;
  justify-content: flex-start;
`

const RibbonSep = styled.div`
  width: 1px;
  height: 54px;
  margin: 8px 1px 0 3px;
  background: #e1e2e3;
`

const AddressRow = styled.div`
  height: 37px;
  display: flex;
  align-items: center;
  padding-bottom: 3px;
`

const NavArrows = styled.div`
  width: 106px;
  display: flex;
  align-items: center;
  padding-left: 13px;
  gap: 16px;
  > svg:nth-child(3) {
    margin-left: -5px;
  }
  > svg:nth-child(4) {
    margin-left: -2px;
  }
`

const AddressBox = styled.div`
  width: 1034px;
  height: 22px;
  border: 1px solid #d9d9d9;
  display: flex;
  align-items: center;
  padding-left: 3px;
`

const Crumb = styled.span<{ $left: number }>`
  margin-left: ${({ $left }) => $left}px;
  margin-right: 7px;
`

const CrumbText = styled.span`
  color: #111;
`

const AddressTools = styled.div`
  margin-left: auto;
  display: flex;
  align-items: center;
  gap: 5px;
  height: 100%;
`

const RefreshSlot = styled.div`
  width: 20px;
  height: 100%;
  border-left: 1px solid #d9d9d9;
  display: flex;
  align-items: center;
  justify-content: center;
`

const SearchBox = styled.div`
  margin-left: 12px;
  width: 202px;
  height: 22px;
  border: 1px solid #d9d9d9;
  color: #6d6d6d;
  display: flex;
  align-items: center;
  justify-content: space-between;
  padding: 0 8px;
`

const Main = styled.div`
  height: 541px;
  display: flex;
`

const NavPane = styled.div`
  width: 275px;
  display: flex;
`

const NavList = styled.div`
  flex: 1;
  padding-top: 6px;
`

const NavRow = styled.div<{ $level: number; $active?: boolean; $gap?: boolean }>`
  height: 24px;
  margin-top: ${({ $gap }) => ($gap ? 8 : 0)}px;
  margin-right: 1px;
  padding-left: ${({ $level }) => 24 + $level * 8}px;
  background: ${({ $active }) => ($active ? '#d9d9d9' : 'transparent')};
  display: flex;
  align-items: center;
  color: #000;
  white-space: nowrap;
`

const NavIcon = styled.div`
  width: 21px;
  display: flex;
  align-items: center;
`

const Scrollbar = styled.div<{ $w: number }>`
  width: ${({ $w }) => $w}px;
  flex: none;
  background: #f0f0f0;
  display: flex;
  flex-direction: column;
`

const ScrollButton = styled.div`
  height: 17px;
  display: flex;
  align-items: center;
  justify-content: center;
`

const ScrollTrack = styled.div`
  flex: 1;
`

const ScrollThumb = styled.div<{ $top: number; $h: number }>`
  margin-top: ${({ $top }) => $top}px;
  height: ${({ $h }) => $h}px;
  margin-right: 1px;
  background: #cdcdcd;
`

const FilePane = styled.div`
  flex: 1;
  display: flex;
  flex-direction: column;
  min-width: 0;
`

const HeaderRow = styled.div`
  flex: none;
  height: 24px;
  display: flex;
  position: relative;
`

const SortGlyph = styled.div`
  position: absolute;
  left: 141px;
  top: -1px;
`

const NameHeader = styled.div`
  width: 276px;
  padding-left: 15px;
  padding-bottom: 2px;
  gap: 10px;
  display: flex;
  align-items: center;
  color: #4c607a;
  border-right: 1px solid #e5e5e5;
`

const HeaderCheck = styled.span`
  width: 13px;
  height: 13px;
  border: 1px solid #333;
  background: #fff;
`

const HeaderCell = styled.div<{ $w: number }>`
  width: ${({ $w }) => $w}px;
  padding-left: 6px;
  padding-bottom: 2px;
  display: flex;
  align-items: center;
  color: #4c607a;
  border-right: 1px solid #e5e5e5;
`

const FileList = styled.div`
  height: 515px;
  flex: none;
  overflow: hidden;
  padding-left: 18px;
`

const FileRow = styled.div<{ $selected?: boolean; $focused?: boolean }>`
  height: 21px;
  width: 574px;
  display: grid;
  grid-template-columns: 264px 120px 120px 70px;
  align-items: center;
  background: ${({ $selected }) => ($selected ? '#cce8ff' : 'transparent')};
  outline: ${({ $focused }) => ($focused ? '1px solid #99d1ff' : 'none')};
  outline-offset: -1px;
  &:first-child {
    margin-top: -16px;
  }
`

const NameCell = styled.div<{ $tracking: number }>`
  display: flex;
  align-items: center;
  padding-left: 4px;
  color: #000;
  white-space: nowrap;
  letter-spacing: ${({ $tracking }) => $tracking}px;
`

const CheckSlot = styled.div`
  width: 17px;
  display: flex;
  align-items: center;
`

const RowCheck = styled.span`
  width: 13px;
  height: 13px;
  border: 1px solid #333;
  background: #fff;
  display: block;
  position: relative;
  &::after {
    content: '';
    position: absolute;
    left: 3px;
    top: 0;
    width: 5px;
    height: 9px;
    border-right: 1px solid #333;
    border-bottom: 1px solid #333;
    transform: rotate(40deg);
  }
`

const FileIconSlot = styled.div`
  width: 18px;
  display: flex;
  align-items: center;
`

const MetaCell = styled.div`
  color: #6d6d6d;
  white-space: nowrap;
  letter-spacing: -0.35px;
`

const SizeCell = styled(MetaCell)`
  text-align: right;
  padding-right: 4px;
`

const StatusBar = styled.div`
  height: 22px;
  display: flex;
  align-items: center;
  padding-left: 14px;
  color: #1e395b;
`

const StatusText = styled.span`
  white-space: nowrap;
`

const StatusSep = styled.span`
  width: 1px;
  height: 14px;
  margin: 0 10px;
  background: #e5e5e5;
`

const ViewButtons = styled.div`
  margin-left: auto;
  display: flex;
  align-items: center;
  gap: 4px;
  padding-right: 8px;
`

const DetailsButton = styled.div`
  width: 22px;
  height: 22px;
  background: #cce8ff;
  border: 1px solid #3d9bd9;
  display: flex;
  align-items: center;
  justify-content: center;
`

const LargeViewSlot = styled.div`
  width: 14px;
  display: flex;
  justify-content: center;
`

const Taskbar = styled.div`
  height: 30px;
  flex: none;
  background: #05060b;
  display: flex;
  align-items: stretch;
  color: #fff;
`

const TaskStart = styled.div`
  width: 40px;
  padding-left: 9px;
  display: flex;
  align-items: center;
`

const TaskUtility = styled.div<{ $w: number }>`
  width: ${({ $w }) => $w}px;
  display: flex;
  align-items: center;
  justify-content: center;
`

const GripSep = styled.span`
  width: 4px;
  height: 15px;
  align-self: center;
  margin: 0 8px;
  border-left: 1px solid #444;
  border-right: 1px solid #444;
`

const TaskIcon = styled.div<{ $w: number; $running?: boolean; $active?: boolean }>`
  width: ${({ $w }) => $w}px;
  background: ${({ $active }) => ($active ? '#333' : 'transparent')};
  display: flex;
  align-items: center;
  justify-content: center;
  position: relative;
  &::after {
    content: '';
    display: ${({ $running }) => ($running ? 'block' : 'none')};
    position: absolute;
    left: 4px;
    right: 4px;
    bottom: 0;
    height: 2px;
    background: #a8d8f5;
  }
`

const Tray = styled.div`
  margin-left: auto;
  display: flex;
  align-items: center;
`

const DesktopLabel = styled.span`
  color: #d4d4d4;
  margin-left: 2px;
`

const Chevrons = styled.span`
  font-size: 14px;
  margin: -12px 10px 0 7px;
  color: #fff;
`

const TrayIcon = styled.div<{ $w: number }>`
  width: ${({ $w }) => $w}px;
  display: flex;
  align-items: center;
  justify-content: center;
`

const GridGlyph = styled.span`
  display: block;
  width: 12px;
  height: 12px;
  background: repeating-conic-gradient(#888 0 25%, #222 0 50%) 0 0 / 2px 2px;
  border: 1px solid #666;
`

const TrayText = styled.span<{ $w: number }>`
  width: ${({ $w }) => $w}px;
  text-align: center;
  color: #d8d8d8;
`

const ClockText = styled.span`
  width: 72px;
  margin-left: 4px;
  text-align: center;
  color: #e8e8e8;
`
